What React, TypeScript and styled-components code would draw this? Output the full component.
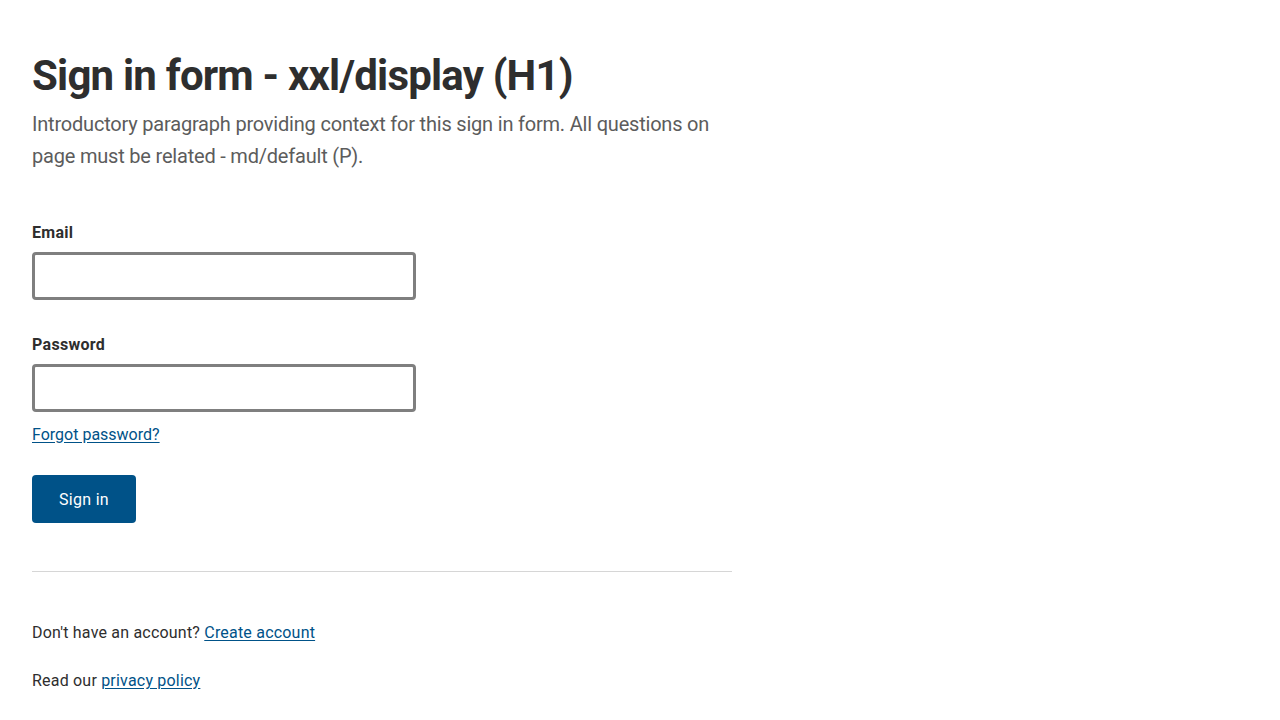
import React from 'react';
import styled, { createGlobalStyle } from 'styled-components';

const GlobalStyle = createGlobalStyle`
  body {
    margin: 0;
    background: #fff;
    font-family: Roboto, "Liberation Sans", Arial, sans-serif;
    color: #2e2e2e;
  }
`;

const Page = styled.main`
  padding: 52px 32px 0;
  width: 700px;
`;

const Title = styled.h1`
  margin: 0;
  font-size: 42px;
  line-height: 48px;
  font-weight: 700;
  letter-spacing: -0.8px;
  color: #2e2e2e;
`;

const Intro = styled.p`
  margin: 8px 0 0;
  font-size: 20px;
  line-height: 32px;
  letter-spacing: -0.2px;
  color: #5c5c5c;
`;

const Form = styled.form`
  margin-top: 48px;
  display: flex;
  flex-direction: column;
  align-items: flex-start;
`;

const Field = styled.div<{ $gap?: number }>`
  display: flex;
  flex-direction: column;
  margin-bottom: ${(p) => p.$gap ?? 0}px;
`;

const Label = styled.label`
  padding-top: 1px;
  font-size: 16px;
  line-height: 24px;
  font-weight: 700;
  letter-spacing: 0.3px;
  color: #2e2e2e;
  margin-bottom: 7px;
`;

const Input = styled.input`
  box-sizing: border-box;
  width: 384px;
  height: 48px;
  border: 3px solid #7f7f7f;
  border-radius: 4px;
  padding: 0 10px;
  font-size: 16px;
  font-family: inherit;
  outline: none;
`;

const TextLink = styled.a`
  color: #005288;
  text-decoration: underline;
  text-underline-offset: 2px;
`;

const Forgot = styled(TextLink)`
  margin-top: 11px;
  font-size: 16px;
  line-height: 24px;
`;

const Button = styled.button`
  margin-top: 28px;
  height: 48px;
  padding: 0 27px;
  border: none;
  border-radius: 4px;
  background: #005288;
  color: #fff;
  font-family: inherit;
  font-size: 16px;
  font-weight: 400;
  letter-spacing: 0.3px;
  cursor: pointer;
`;

const Divider = styled.hr`
  margin: 48px 0 0;
  border: none;
  border-top: 1px solid #d6d6d6;
  width: 700px;
`;

const Footer = styled.div`
  margin-top: 49px;
  display: flex;
  flex-direction: column;
  gap: 24px;
`;

const FooterLine = styled.p`
  margin: 0;
  font-size: 16px;
  line-height: 24px;
  letter-spacing: 0.2px;
  color: #2e2e2e;
`;

export default function App() {
  return (
    <>
      <GlobalStyle />
      <Page>
        <Title>Sign in form - xxl/display (H1)</Title>
        <Intro>
          Introductory paragraph providing context for this sign in form. All questions on page must be
          related - md/default (P).
        </Intro>
        <Form onSubmit={(e) => e.preventDefault()}>
          <Field $gap={32}>
            <Label htmlFor="email">Email</Label>
            <Input id="email" type="email" />
          </Field>
          <Field>
            <Label htmlFor="password">Password</Label>
            <Input id="password" type="password" />
          </Field>
          <Forgot href="#">Forgot password?</Forgot>
          <Button type="submit">Sign in</Button>
        </Form>
        <Divider />
        <Footer>
          <FooterLine>
            Don't have an account? <TextLink href="#">Create account</TextLink>
          </FooterLine>
          <FooterLine>
            Read our <TextLink href="#">privacy policy</TextLink>
          </FooterLine>
        </Footer>
      </Page>
    </>
  );
}
